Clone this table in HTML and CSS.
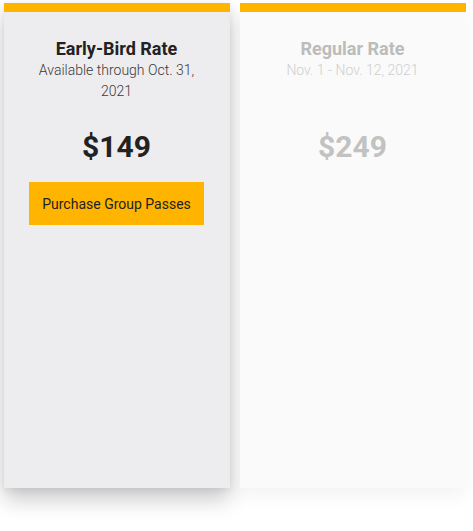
FILE: index.html
```html
<!DOCTYPE html>
<html>
<head>
<meta charset="utf-8">
<link rel="stylesheet" href="styles.css">
</head>
<body>
<div class="plans">
  <div class="card card-active">
    <div class="head">
      <div class="title">Early-Bird Rate</div>
      <div class="sub">Available through Oct. 31, 2021</div>
    </div>
    <div class="price">$149</div>
    <a class="btn">Purchase Group Passes</a>
  </div>
  <div class="card card-muted">
    <div class="head">
      <div class="title">Regular Rate</div>
      <div class="sub">Nov. 1 - Nov. 12, 2021</div>
    </div>
    <div class="price">$249</div>
  </div>
</div>
</body>
</html>
```
FILE: styles.css
```css
html, body {
  margin: 0;
  padding: 0;
  background: #ffffff;
}
body {
  font-family: Roboto, "Liberation Sans", sans-serif;
}
.plans {
  display: flex;
  gap: 10px;
  padding: 3px 7px 40px 4px;
}
.card {
  box-sizing: border-box;
  width: 226px;
  height: 485px;
  border-top: 9px solid #ffb400;
  padding: 25px 21px 0 20px;
  display: flex;
  flex-direction: column;
  align-items: center;
  text-align: center;
}
.card-active {
  background: #edecee;
  box-shadow: 0 12px 20px rgba(0, 0, 0, 0.2), 0 2px 8px rgba(0, 0, 0, 0.08);
}
.card-muted {
  background: #fafafa;
  box-shadow: 0 8px 18px rgba(0, 0, 0, 0.05);
}
.head {
  height: 65px;
}
.title {
  font-size: 18px;
  font-weight: 700;
  line-height: 23px;
  color: #222222;
}
.sub {
  font-size: 14px;
  font-weight: 300;
  line-height: 21px;
  color: #3a3a3a;
}
.price {
  margin-top: 27px;
  font-size: 30px;
  font-weight: 700;
  line-height: 36px;
  color: #222222;
}
.btn {
  display: flex;
  align-items: center;
  justify-content: center;
  box-sizing: border-box;
  margin-top: 17px;
  width: 175px;
  height: 43px;
  background: #ffb400;
  color: #222222;
  font-size: 14px;
  font-weight: 400;
}
.card-muted .title {
  color: #bcbcbc;
}
.card-muted .sub {
  color: #cfcfcf;
}
.card-muted .price {
  color: #c2c2c2;
}
```
